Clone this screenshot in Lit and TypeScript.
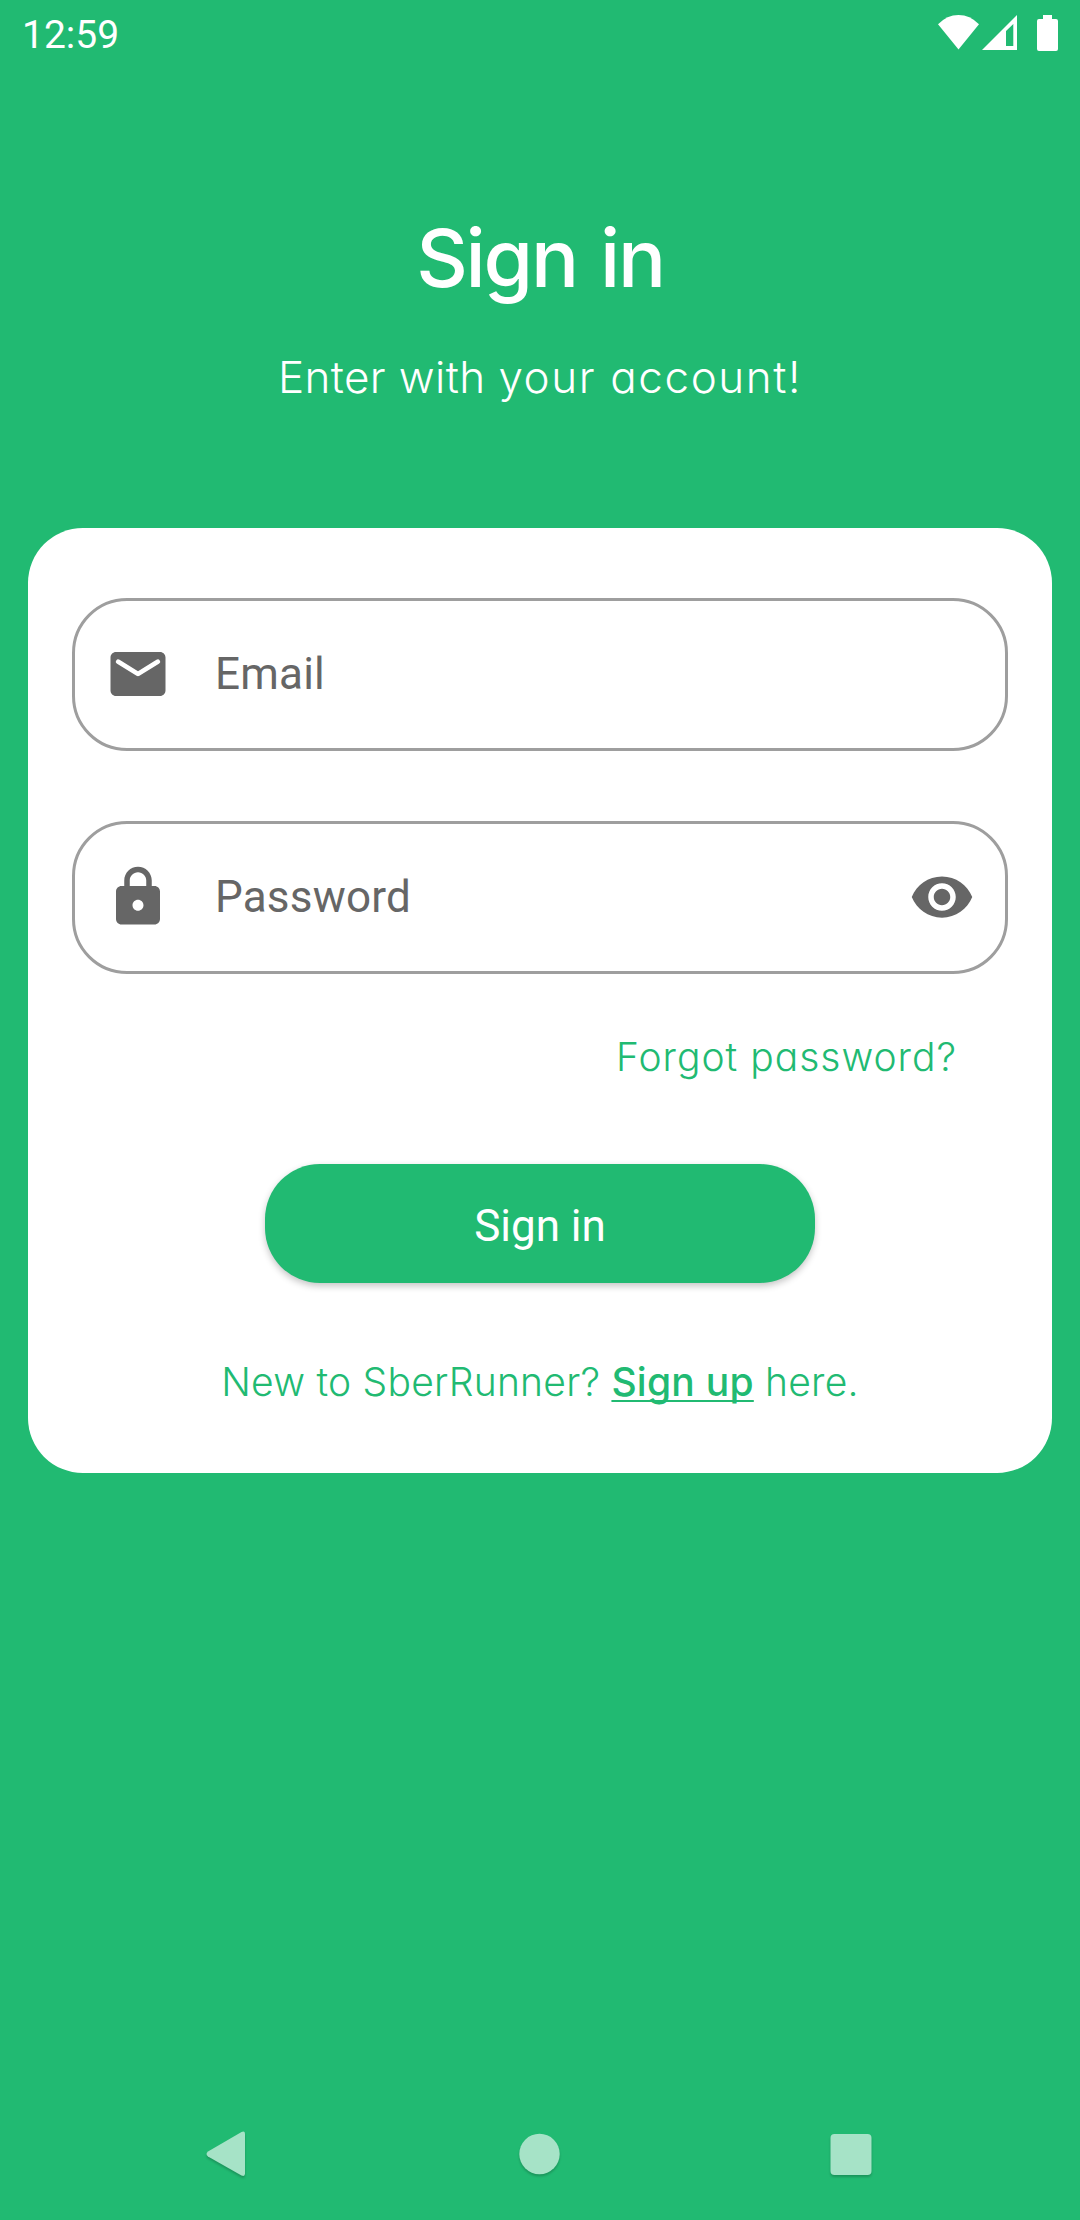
import { LitElement, html, css } from "lit";
import { customElement } from "lit/decorators.js";

@customElement("app-root")
export class AppRoot extends LitElement {
  static styles = css`
    :host {
      display: block;
    }
    * {
      box-sizing: border-box;
    }
    .screen {
      width: 1080px;
      height: 2220px;
      background: #21ba72;
      display: flex;
      flex-direction: column;
      overflow: hidden;
      font-family: Roboto, sans-serif;
    }
    .status {
      height: 70px;
      padding: 0 20px 0 22px;
      display: flex;
      justify-content: space-between;
      align-items: flex-start;
      color: #fff;
    }
    .clock {
      font-size: 39px;
      line-height: 70px;
    }
    .status-icons {
      display: block;
      width: 124px;
      height: 40px;
      margin-top: 13px;
    }
    .geo {
      font-family: Inter, sans-serif;
      font-weight: 300;
      font-feature-settings: "cv11" 1;
      white-space: nowrap;
    }
    .title {
      margin: 138px 0 0;
      font-size: 80px;
      line-height: 100px;
      font-weight: 500;
      letter-spacing: -2.2px;
      word-spacing: 4px;
      color: #fff;
      text-align: center;
    }
    .subtitle {
      margin: 39px 0 0;
      font-size: 44px;
      line-height: 60px;
      letter-spacing: 0.4px;
      color: #fff;
      text-align: center;
    }
    .wide {
      letter-spacing: 1.6px;
    }
    .card {
      margin: 121px 28px 0;
      height: 945px;
      padding: 70px 44px 0;
      border-radius: 55px;
      background: #fff;
      display: flex;
      flex-direction: column;
    }
    .field {
      height: 153px;
      border: 3px solid #9e9e9e;
      border-radius: 55px;
      padding: 0 30px 1px;
      display: flex;
      align-items: center;
      color: #666;
    }
    .field + .field {
      margin-top: 70px;
    }
    .icon {
      width: 66px;
      height: 66px;
      fill: #666;
      flex: none;
    }
    .hint {
      flex: 1;
      margin-left: 44px;
      font-size: 44px;
      line-height: 60px;
      letter-spacing: 0.2px;
    }
    .forgot {
      align-self: flex-end;
      margin: 58px 51px 0 0;
      font-size: 39px;
      line-height: 50px;
      letter-spacing: 1px;
      color: #21ba72;
    }
    .submit {
      align-self: center;
      width: 550px;
      height: 119px;
      margin-top: 82px;
      padding: 5px 0 0;
      border: 0;
      border-radius: 55px;
      background: #21ba72;
      box-shadow: 0 3px 7px rgba(0, 0, 0, 0.23);
      color: #fff;
      font-family: inherit;
      font-size: 44px;
      line-height: 60px;
    }
    .signup {
      margin-top: 74px;
      font-size: 39px;
      line-height: 50px;
      letter-spacing: 0.25px;
      color: #21ba72;
      text-align: center;
    }
    .link {
      font-weight: 500;
      text-decoration: underline;
      text-decoration-thickness: 2px;
      text-underline-offset: 4px;
      text-decoration-skip-ink: none;
    }
    .nav {
      margin-top: auto;
      height: 132px;
      padding: 0 207px 0 205px;
      display: flex;
      justify-content: space-between;
      align-items: center;
    }
    .nav-icon {
      width: 42px;
      height: 52px;
      fill: #a6e3c7;
      overflow: visible;
      filter: drop-shadow(0 2px 1px rgba(0, 0, 0, 0.2));
    }
  `;

  render() {
    return html`
      <div class="screen">
        <header class="status">
          <span class="clock">12:59</span>
          <svg class="status-icons" viewBox="936 13 124 40" fill="#fff">
            <path d="M938 24.3Q947 15 958.5 15T979 24.3L958.5 49.5Z" />
            <path fill-rule="evenodd" d="M982 50L1017 15V50ZM1006 31V46H1013.3V24Z" />
            <path d="M1043 15H1052V19H1056Q1058 19 1058 21V49Q1058 51 1056 51H1039Q1037 51 1037 49V21Q1037 19 1039 19H1043Z" />
          </svg>
        </header>
        <h1 class="geo title">Sign in</h1>
        <p class="geo subtitle">Enter with <span class="wide">your account!</span></p>
        <main class="card">
          <div class="field">
            <svg class="icon" viewBox="0 0 24 24">
              <path d="M20 4H4c-1.1 0-2 .9-2 2v12c0 1.1.9 2 2 2h16c1.1 0 2-.9 2-2V6c0-1.1-.9-2-2-2zm-.4 4.250l-7.070 4.420c-.32.2-.74.2-1.060 0L4.400 8.250a.85.85 0 1 1 .9-1.440L12 11l6.700-4.190a.85.85 0 1 1 .9 1.440z" />
            </svg>
            <span class="hint">Email</span>
          </div>
          <div class="field">
            <svg class="icon" viewBox="0 0 24 24">
              <path d="M18 8h-1V6c0-2.760-2.240-5-5-5S7 3.240 7 6v2H6c-1.100 0-2 .9-2 2v10c0 1.100.9 2 2 2h12c1.100 0 2-.9 2-2V10c0-1.100-.9-2-2-2zm-6 9c-1.100 0-2-.9-2-2s.9-2 2-2 2 .9 2 2-.9 2-2 2zM9 8V6c0-1.660 1.340-3 3-3s3 1.340 3 3v2H9z" />
            </svg>
            <span class="hint">Password</span>
            <svg class="icon" viewBox="0 0 24 24">
              <path d="M12 4.500C7 4.500 2.730 7.610 1 12c1.730 4.390 6 7.500 11 7.500s9.270-3.110 11-7.500c-1.730-4.390-6-7.500-11-7.500zM12 17c-2.760 0-5-2.240-5-5s2.240-5 5-5 5 2.240 5 5-2.240 5-5 5zm0-8c-1.660 0-3 1.340-3 3s1.340 3 3 3 3-1.340 3-3-1.340-3-3-3z" />
            </svg>
          </div>
          <span class="geo forgot">Forgot password?</span>
          <button class="submit">Sign in</button>
          <div class="geo signup">New to SberRunner? <span class="link">Sign up</span> here.</div>
        </main>
        <nav class="nav">
          <svg class="nav-icon" viewBox="0 0 42 52">
            <path d="M3 23.500L36.500 4Q40 2.500 40 6V45.500Q40 49 36.500 47.500L3 28.500Q0 26 3 23.500Z" />
          </svg>
          <svg class="nav-icon" viewBox="0 0 42 52"><circle cx="21.500" cy="26" r="20.200" /></svg>
          <svg class="nav-icon" viewBox="0 0 42 52"><rect x="-0.500" y="6" width="41" height="41" rx="4" /></svg>
        </nav>
      </div>
    `;
  }
}
